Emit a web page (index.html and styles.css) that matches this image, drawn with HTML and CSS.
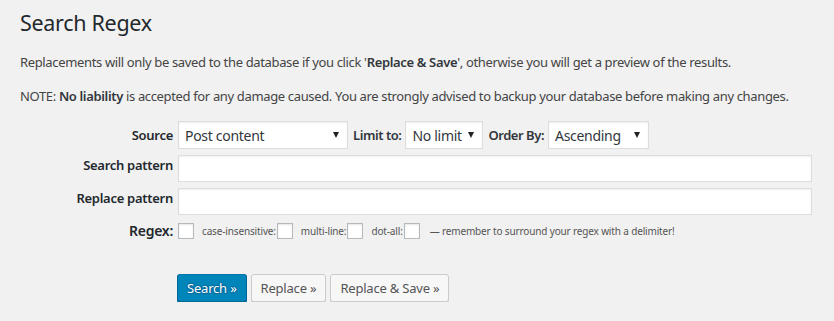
FILE: index.html
```html
<!DOCTYPE html>
<html lang="en">
<head>
<meta charset="UTF-8">
<title>Search Regex</title>
<link rel="stylesheet" href="styles.css">
</head>
<body>

<div class="wrap">
    <h1>Search Regex</h1>

    <p>Replacements will only be saved to the database if you click '<strong>Replace &amp; Save</strong>', otherwise you will get a preview of the results.</p>
    <p>NOTE: <strong>No liability</strong> is accepted for any damage caused. You are strongly advised to backup your database before making any changes.</p>

    <form class="search-form">
        <div class="form-row row-source">
            <label class="row-label">Source</label>
            <div class="row-field">
                <span class="select select-source"><select><option>Post content</option></select></span>
                <label class="inline-label">Limit to:</label>
                <span class="select select-limit"><select><option>No limit</option></select></span>
                <label class="inline-label">Order By:</label>
                <span class="select select-order"><select><option>Ascending</option></select></span>
            </div>
        </div>

        <div class="form-row">
            <label class="row-label">Search pattern</label>
            <div class="row-field"><input type="text" class="text-input"></div>
        </div>

        <div class="form-row">
            <label class="row-label">Replace pattern</label>
            <div class="row-field"><input type="text" class="text-input"></div>
        </div>

        <div class="form-row row-regex">
            <label class="row-label">Regex:</label>
            <div class="row-field">
                <input type="checkbox" class="check">
                <span class="small-label">case-insensitive:</span>
                <input type="checkbox" class="check">
                <span class="small-label">multi-line:</span>
                <input type="checkbox" class="check">
                <span class="small-label">dot-all:</span>
                <input type="checkbox" class="check">
                <span class="small-label hint">&mdash; remember to surround your regex with a delimiter!</span>
            </div>
        </div>

        <div class="buttons">
            <button type="button" class="button button-primary">Search &raquo;</button>
            <button type="button" class="button">Replace &raquo;</button>
            <button type="button" class="button">Replace &amp; Save &raquo;</button>
        </div>
    </form>
</div>

</body>
</html>
```

FILE: styles.css
```css
body {
    margin: 0;
    background: #f1f1f1;
    color: #444;
    font-family: "Noto Sans", "Open Sans", sans-serif;
    font-size: 13px;
    letter-spacing: -0.35px;
    line-height: 1.4;
}
.wrap { padding: 0 22px 0 20px; }
h1 {
    font-size: 21.5px;
    font-weight: 400;
    color: #23282d;
    margin: 0;
    padding: 8px 0 0;
    line-height: 29px;
    letter-spacing: -0.3px;
}
p { margin: 16px 0; }
strong { font-weight: 600; color: #32373c; }

.search-form { margin-top: 15px; }
.form-row {
    display: grid;
    grid-template-columns: 153px 1fr;
    column-gap: 5px;
    margin-bottom: 6px;
}
.row-label {
    text-align: right;
    font-weight: 600;
    color: #23282d;
    padding-top: 1px;
    letter-spacing: -0.28px;
}
.row-source .row-label { padding-top: 5px; }
.row-field { display: flex; align-items: center; }

.select { position: relative; display: inline-block; }
.select select {
    appearance: none;
    -webkit-appearance: none;
    height: 28px;
    border: 1px solid #ddd;
    box-shadow: inset 0 1px 2px rgba(0,0,0,.07);
    background: #fff;
    color: #32373c;
    font-family: inherit;
    font-size: 14px;
    letter-spacing: -0.3px;
    padding: 0 6px;
    border-radius: 0;
}
.select::after {
    content: "";
    position: absolute;
    right: 9px;
    top: 11px;
    border-left: 3px solid transparent;
    border-right: 3px solid transparent;
    border-top: 6px solid #222;
    pointer-events: none;
}
.select-source select { width: 170px; }
.select-limit select { width: 78px; }
.select-order select { width: 101px; }
.inline-label {
    font-weight: 600;
    color: #32373c;
    margin: 0 4px 0 5px;
    letter-spacing: -0.45px;
}

.text-input {
    width: 100%;
    box-sizing: border-box;
    height: 27px;
    border: 1px solid #ddd;
    box-shadow: inset 0 1px 2px rgba(0,0,0,.07);
    background: #fff;
    margin: 0;
}

.row-regex { margin-top: 4px; }
.row-regex .row-label { font-size: 14px; padding-top: 0; }
.check {
    appearance: none;
    -webkit-appearance: none;
    width: 16px;
    height: 16px;
    margin: 0 6px 0 0;
    border: 1px solid #b4b9be;
    background: #fff;
    box-shadow: inset 0 1px 2px rgba(0,0,0,.1);
}
.small-label { font-size: 10px; letter-spacing: -0.15px; color: #555; margin: 0 1px 0 2px; }
.hint { margin-left: 4px; }

.buttons { margin: 33px 0 0 157px; display: flex; gap: 4px; }
.button {
    height: 28px;
    padding: 0 9px 1px;
    font-family: inherit;
    font-size: 13px;
    letter-spacing: -0.2px;
    line-height: 26px;
    color: #555;
    background: #f7f7f7;
    border: 1px solid #ccc;
    border-radius: 3px;
    box-shadow: 0 1px 0 #ccc;
    cursor: pointer;
}
.button-primary {
    background: #0085ba;
    border-color: #0073aa #006799 #006799;
    box-shadow: 0 1px 0 #006799;
    color: #fff;
    text-shadow: 0 -1px 1px #006799, 1px 0 1px #006799, 0 1px 1px #006799, -1px 0 1px #006799;
}
```
